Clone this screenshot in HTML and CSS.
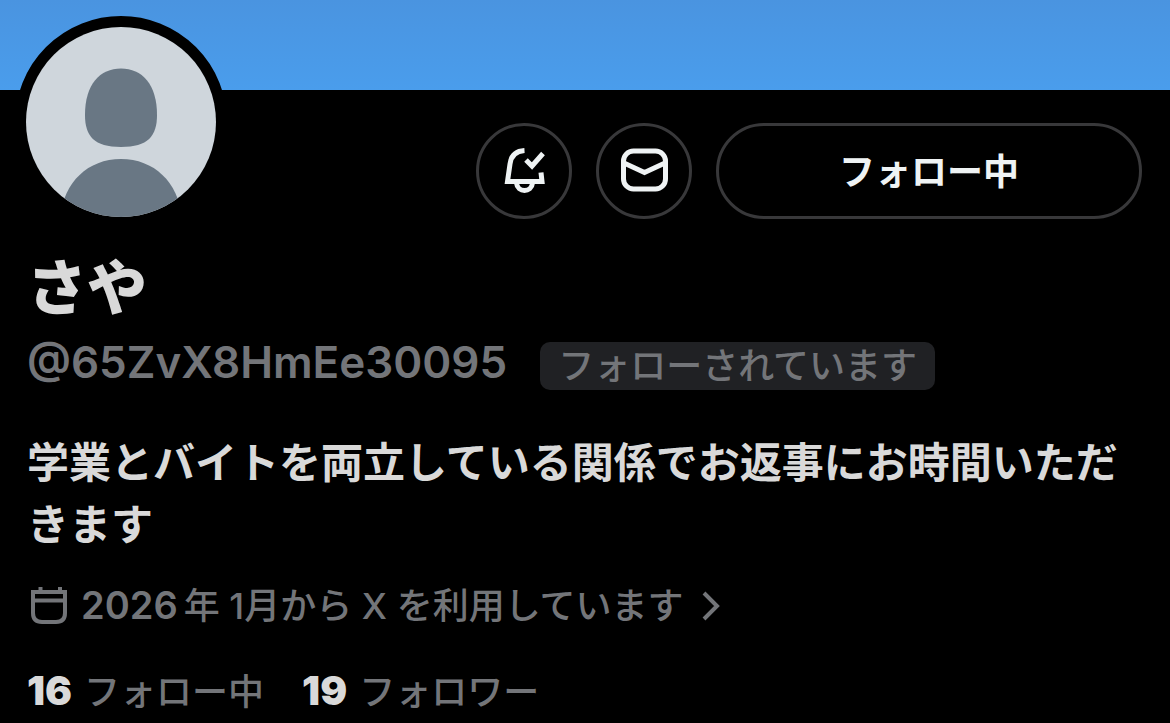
FILE: index.html
```
<!DOCTYPE html>
<html lang="ja">
<head>
    <meta charset="UTF-8">
    <meta name="viewport" content="width=device-width, initial-scale=1.0">
    <title>さや (@65ZvX8HmEe30095)</title>
    <link rel="stylesheet" href="styles.css">
</head>
<body>
    <div class="banner"></div>

    <main class="profile">
        <div class="profile-top">
            <svg class="avatar" viewBox="0 0 190 190" role="img" aria-label="さや">
                <rect width="190" height="190" fill="#cfd6dc"/>
                <path d="M95 41.500C116 41.500 131 57 131 88C131 109 122 120 95 120C68 120 59 109 59 88C59 57 74 41.500 95 41.500Z" fill="#697784"/>
                <path d="M34 190C38 155 62 132 95 132C128 132 152 155 156 190Z" fill="#697784"/>
            </svg>
            <div class="actions">
                <button class="icon-button" type="button" aria-label="通知">
                    <svg viewBox="0 0 48 48">
                        <path d="M24.500 3.500C16 4 11 9 10 17L7.500 34.500H42L41 25.500"/>
                        <path d="M16.500 36C17.500 46 31.500 46 32.500 36"/>
                        <path d="M26 13L32 19L43 6.500"/>
                    </svg>
                </button>
                <button class="icon-button" type="button" aria-label="メッセージ">
                    <svg viewBox="0 0 48 48">
                        <rect x="3.500" y="4" width="42" height="38" rx="10"/>
                        <path d="M4 16L24.500 25.500L45 16"/>
                    </svg>
                </button>
                <button class="follow-button" type="button">フォロー中</button>
            </div>
        </div>

        <h1 class="name">さや</h1>
        <div class="handle-row">
            <span class="handle">@65ZvX8HmEe30095</span>
            <span class="badge">フォローされています</span>
        </div>

        <p class="bio">学業とバイトを両立している関係でお返事にお時間いただきます</p>

        <a class="joined" href="#">
            <svg class="calendar" viewBox="0 0 40 40">
                <path d="M4 6H36V27Q36 36 27 36H13Q4 36 4 27Z M4 14.500H36 M11.500 1V6 M31 1V6"/>
            </svg>
            <span><span class="year">2026</span>年 1月から X を利用しています</span>
            <svg class="chevron" viewBox="0 0 18 32">
                <path d="M2 3L15 16L2 29"/>
            </svg>
        </a>

        <div class="stats">
            <a href="#"><strong>16</strong>フォロー中</a>
            <a href="#"><strong>19</strong>フォロワー</a>
        </div>
    </main>
</body>
</html>
```
FILE: styles.css
```
* {
    box-sizing: border-box;
}
body {
    margin: 0;
    background-color: #000;
    color: #d9d9d9;
    font-family: Inter, "Noto Sans CJK JP", sans-serif;
    font-size: 36px;
    font-weight: 500;
}
a {
    color: inherit;
    text-decoration: none;
}
svg {
    fill: none;
}
.banner {
    height: 90px;
    background-image: linear-gradient(to bottom, #4a94e0, #4a9dec);
}
.profile {
    padding: 0 28px 0 27px;
}
.profile-top {
    display: flex;
    justify-content: space-between;
    align-items: flex-start;
}
.avatar {
    width: 212px;
    height: 212px;
    margin: -74px 0 0 -12px; /* заходит на баннер */
    border: 11px solid #000;
    border-radius: 50%;
    background-color: #000;
}
.actions {
    display: flex;
    gap: 24px;
    margin-top: 33px;
}
.icon-button,
.follow-button {
    height: 96px;
    padding: 0;
    border: 3px solid #38383a;
    border-radius: 48px;
    background-color: transparent;
    color: #eff3f4;
    cursor: pointer;
}
.icon-button {
    display: flex;
    align-items: center;
    justify-content: center;
    width: 96px;
}
.icon-button svg {
    width: 48px;
    height: 48px;
    stroke: currentColor;
    stroke-width: 5;
}
.follow-button {
    width: 426px;
    padding-bottom: 4px;
    font: inherit;
    font-weight: 700;
}
.name {
    margin: 24px 0 0;
    font-size: 60px;
    font-weight: 900;
    line-height: 72px;
}
.handle-row {
    display: flex;
    align-items: flex-end;
    gap: 33px;
    margin-top: 10px;
    color: #737579;
}
.handle {
    font-size: 44px;
    font-weight: 600;
    line-height: 56px;
}
.badge {
    padding: 0 18px;
    border-radius: 10px;
    background-color: #202124;
    line-height: 48px;
}
.bio {
    margin: 42px 0 0;
    font-size: 42px;
    font-weight: 600;
    line-height: 62px;
}
.joined {
    display: flex;
    align-items: center;
    margin-top: 25px;
    line-height: 48px;
    color: #737579;
}
.joined svg {
    stroke: currentColor;
    stroke-width: 4;
}
.calendar {
    width: 40px;
    height: 40px;
    margin: 0 12px 0 2px;
}
.year {
    margin-right: 6px;
    font-size: 38px;
    font-weight: 600;
}
.chevron {
    width: 18px;
    height: 32px;
    margin-left: 18px;
}
.stats {
    display: flex;
    gap: 38px;
    margin-top: 37px;
    line-height: 48px;
    color: #737579;
}
.stats strong {
    margin-right: 12px;
    font-size: 40px;
    font-weight: 900;
    color: #d9d9d9;
}
```
